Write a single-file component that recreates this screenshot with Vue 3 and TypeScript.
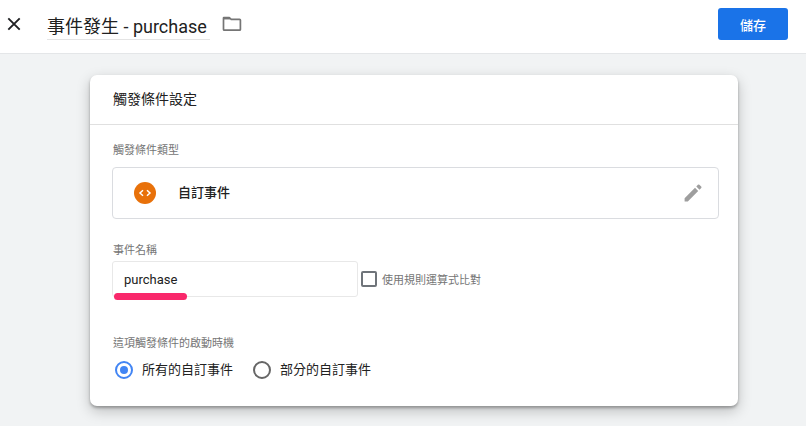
<script setup lang="ts">
import { ref } from 'vue'

type FiringMode = 'all' | 'some'

const triggerName = ref<string>('事件發生 - purchase')
const eventName = ref<string>('purchase')
const useRegex = ref<boolean>(false)
const firing = ref<FiringMode>('all')

const firingOptions: { value: FiringMode; label: string }[] = [
  { value: 'all', label: '所有的自訂事件' },
  { value: 'some', label: '部分的自訂事件' },
]
</script>

<template>
  <div class="page">
    <header class="topbar">
      <button class="icon-button close" type="button" aria-label="關閉">
        <svg width="14" height="14" viewBox="0 0 14 14" fill="none" stroke="#202124" stroke-width="1.9">
          <path d="M1.3 1.3 12.7 12.7M12.7 1.3 1.3 12.7" />
        </svg>
      </button>
      <input v-model="triggerName" class="title" type="text" aria-label="觸發條件名稱" />
      <button class="icon-button folder" type="button" aria-label="資料夾">
        <svg width="20" height="16" viewBox="0 0 20 16" fill="none" stroke="#757575" stroke-width="1.7" stroke-linejoin="round">
          <path d="M1.9 1.5H7.3L9.2 3.3H17.6Q18.4 3.3 18.4 4.1V13.4Q18.4 14.2 17.6 14.2H2.3Q1.5 14.2 1.5 13.4V2Q1.5 1.5 1.9 1.5Z" />
          <path d="M1.8 2.6H8" />
        </svg>
      </button>
      <button class="save" type="button">儲存</button>
    </header>

    <main class="content">
      <section class="card">
        <h2 class="card-title">觸發條件設定</h2>
        <div class="card-body">
          <h3 class="label">觸發條件類型</h3>
          <button class="type-row" type="button">
            <svg class="type-icon" width="22" height="22" viewBox="0 0 22 22">
              <circle cx="11" cy="11" r="11" fill="#e8710a" />
              <path d="M9 8.2 6 11 9 13.8M13 8.2 16 11 13 13.8" fill="none" stroke="#fff" stroke-width="1.5" />
            </svg>
            <span class="type-name">自訂事件</span>
            <svg class="pencil" width="24" height="24" viewBox="0 0 24 24" fill="#9e9e9e">
              <path d="M3.6 17.2V20.4H6.8L17.2 10 14 6.8ZM20.2 7.1a1.1 1.1 0 0 0 0-1.5l-1.8-1.8a1.1 1.1 0 0 0-1.5 0l-1.6 1.7 3.2 3.2Z" />
            </svg>
          </button>

          <label class="label name-label" for="event-name">事件名稱</label>
          <div class="name-row">
            <div class="field">
              <input id="event-name" v-model="eventName" class="text-input" type="text" />
              <span class="marker"></span>
            </div>
            <label class="check">
              <input v-model="useRegex" type="checkbox" />
              <span>使用規則運算式比對</span>
            </label>
          </div>

          <fieldset class="firing">
            <legend class="label">這項觸發條件的啟動時機</legend>
            <div class="radios">
              <label v-for="option in firingOptions" :key="option.value" class="radio">
                <input v-model="firing" type="radio" name="firing" :value="option.value" />
                <span>{{ option.label }}</span>
              </label>
            </div>
          </fieldset>
        </div>
      </section>
    </main>
  </div>
</template>

<style>
body {
  margin: 0;
  background: #f1f3f4;
}
</style>

<style scoped>
.page {
  min-height: 100vh;
  background: #f1f3f4;
  color: #212121;
  font-family: Roboto, 'Noto Sans CJK TC', sans-serif;
  font-size: 13px;
}

.page *,
.page *::before {
  box-sizing: border-box;
}

button,
input {
  font: inherit;
  color: inherit;
}

.topbar {
  display: flex;
  align-items: center;
  height: 54px;
  padding: 0 18px 5px 7px;
  background: #fff;
  border-bottom: 1px solid #e4e6e8;
}

.icon-button {
  display: flex;
  padding: 0;
  border: 0;
  background: none;
}

.title {
  width: 163px;
  height: 28px;
  margin: 4px 12px 0 26px;
  padding: 0 0 2px;
  border: 0;
  border-bottom: 1px solid #e4e4e4;
  outline: 0;
  background: none;
  font-size: 18px;
}

.save {
  width: 70px;
  height: 32px;
  margin-left: auto;
  padding: 0;
  border: 0;
  border-radius: 3px;
  background: #1a73e8;
  color: #fff;
  font-weight: 500;
}

.content {
  padding: 21px 68px 20px 90px;
}

.card {
  border-radius: 7px;
  background: #fff;
  box-shadow: 0 2px 3px rgba(0, 0, 0, 0.28), 0 5px 14px rgba(0, 0, 0, 0.22);
}

.card-title {
  margin: 0;
  padding: 0 23px;
  border-bottom: 1px solid #e0e0e0;
  font-size: 14px;
  font-weight: 400;
  line-height: 49px;
}

.card-body {
  padding: 17px 19px 26px 22px;
}

.label {
  display: block;
  margin: 0;
  padding: 0 1px;
  color: #757575;
  font-size: 11px;
  font-weight: 400;
  line-height: 18px;
}

.type-row {
  display: flex;
  align-items: center;
  width: 100%;
  height: 52px;
  margin-top: 7px;
  padding: 0 13px 0 21px;
  border: 1px solid #dadce0;
  border-radius: 4px;
  background: #fff;
  text-align: left;
}

.type-name {
  flex: 1;
  margin-left: 22px;
  padding-bottom: 3px;
  font-weight: 500;
}

.name-label {
  margin-top: 23px;
}

.name-row {
  display: flex;
  align-items: center;
  gap: 3px;
  margin-top: 1px;
}

.field {
  position: relative;
  width: 246px;
}

.text-input {
  display: block;
  width: 100%;
  height: 36px;
  padding: 0 11px;
  border: 1px solid #e8e8e8;
  border-radius: 3px;
  outline: 0;
  background: #fff;
}

.marker {
  position: absolute;
  bottom: -3px;
  left: 2px;
  width: 73px;
  height: 7px;
  border-radius: 4px;
  background: #f9286b;
}

.check,
.radio {
  display: flex;
  align-items: center;
}

.check {
  gap: 5px;
  color: #757575;
  font-size: 11px;
}

.check input {
  appearance: none;
  width: 16px;
  height: 16px;
  margin: 0;
  border: 2px solid #6f747a;
  border-radius: 2px;
}

.check input:checked {
  background: #4285f4;
}

.firing {
  margin: 38px 0 0;
  padding: 0;
  border: 0;
}

.radios {
  display: flex;
  gap: 20px;
  margin-top: 7px;
  padding-left: 3px;
}

.radio {
  gap: 9px;
  line-height: 20px;
}

.radio input {
  display: grid;
  place-items: center;
  appearance: none;
  width: 18px;
  height: 18px;
  margin: 0;
  border: 2px solid #666;
  border-radius: 50%;
}

.radio input:checked {
  border-color: #4285f4;
}

.radio input:checked::before {
  content: '';
  width: 8px;
  height: 8px;
  border-radius: 50%;
  background: #4285f4;
}
</style>
